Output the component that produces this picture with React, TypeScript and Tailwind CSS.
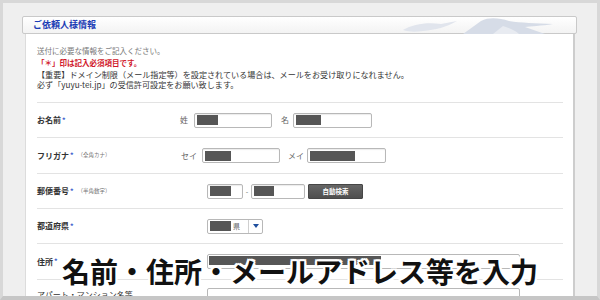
import type { ReactNode } from 'react';

const jp = "font-['Noto_Sans_CJK_JP','Noto_Sans',sans-serif]";

function Box({ w, fill, h = 'h-[15px]' }: { w: string; fill: string; h?: string }) {
  return (
    <div
      className={`flex items-center rounded-[2px] border border-[#b8b8b8] bg-white pl-[2px] shadow-[inset_0_1px_1px_rgba(0,0,0,0.08)] ${h} ${w}`}
    >
      <span className={`h-[10px] bg-[#565656] ${fill}`} />
    </div>
  );
}

function Label({ text, note }: { text: string; note?: string }) {
  return (
    <div className="flex w-[143px] shrink-0 items-center">
      <span className="text-[8px] font-bold text-[#333]">{text}</span>
      <span className="ml-[1px] text-[7px] font-bold text-[#3a5ccc]">*</span>
      {note ? <span className="ml-[4px] text-[5.5px] text-[#777]">{note}</span> : null}
    </div>
  );
}

function Row({ h, children }: { h: string; children: ReactNode }) {
  return <div className={`flex items-center border-t border-[#e3e3e3] ${h}`}>{children}</div>;
}

function Wave() {
  return (
    <svg
      className="absolute left-[378px] top-0"
      width="160"
      height="17"
      viewBox="0 0 160 17"
      fill="none"
    >
      <path d="M2 13 C12 7 26 5 40 7 L56 4 C46 10 34 13 22 14 C14 15 8 15 2 13 Z" fill="#e1e5ed" />
      <path
        d="M62 17 L80 4 C88 0 98 1 108 4 C120 6 134 6 152 7 C140 9 130 9 124 10 L144 17 Z"
        fill="#d6dce7"
      />
      <path d="M92 17 L102 9 C108 11 114 13 118 17 Z" fill="#e8ebf1" />
    </svg>
  );
}

export default function App() {
  return (
    <div
      className={`relative flex h-[300px] w-[600px] flex-col overflow-hidden border-[3px] border-b-4 border-[#d8d8d8] border-b-[#c6c6c6] bg-[#efefef] ${jp}`}
    >
      <div className="relative ml-[19px] mt-[13px] flex h-[18px] w-[555px] shrink-0 items-center rounded-[2px] border border-[#c9c9c9] bg-gradient-to-b from-white to-[#f3f3f3] pl-[10px]">
        <Wave />
        <span className="relative text-[9px] font-bold text-[#1c3db5]">ご依頼人様情報</span>
      </div>

      <div className="ml-[22px] flex w-[550px] flex-1 flex-col border-l border-r-2 border-l-[#dcdcdc] border-r-[#cdcdcd] bg-white pl-[11px] pr-[10px]">
        <div className="pb-[12px] pt-[11px]">
          <p className="h-[12px] text-[7.5px] leading-[12px] text-[#777]">送付に必要な情報をご記入ください。</p>
          <p className="h-[12px] text-[7.5px] font-bold leading-[12px] text-[#d0172a]">「＊」印は記入必須項目です。</p>
          <p className="mt-[1px] text-[8.1px] leading-[10px] text-[#333]">
            【重要】ドメイン制限（メール指定等）を設定されている場合は、メールをお受け取りになれません。
            <br />
            必ず「yuyu-tei.jp」の受信許可設定をお願い致します。
          </p>
        </div>

        <Row h="h-[35px]">
          <Label text="お名前" />
          <span className="w-[14px] text-[8px] text-[#666]">姓</span>
          <Box w="w-[78px]" fill="w-[21px]" />
          <span className="ml-[9px] w-[12px] text-[8px] text-[#666]">名</span>
          <Box w="w-[79px]" fill="w-[25px]" />
        </Row>

        <Row h="h-[36px]">
          <Label text="フリガナ" note="（全角カナ）" />
          <span className="w-[22px] pl-[1px] text-[8px] text-[#666]">セイ</span>
          <Box w="w-[78px]" fill="w-[26px]" />
          <span className="ml-[8px] w-[19px] text-[8px] text-[#666]">メイ</span>
          <Box w="w-[79px]" fill="w-[45px]" />
        </Row>

        <Row h="h-[35px]">
          <Label text="郵便番号" note="（半角数字）" />
          <div className="ml-[27px] flex items-center">
            <Box w="w-[36px]" fill="w-[21px]" />
            <span className="w-[8px] text-center text-[7px] text-[#666]">-</span>
            <Box w="w-[54px]" fill="w-[20px]" />
            <button
              type="button"
              className="ml-[3px] h-[15px] w-[55px] rounded-[1px] border border-[#464646] bg-gradient-to-b from-[#666] to-[#4f4f4f] text-[6.5px] font-bold leading-none text-white"
            >
              自動検索
            </button>
          </div>
        </Row>

        <Row h="h-[35px]">
          <Label text="都道府県" />
          <div className="ml-[27px] flex h-[15px] w-[56px] items-center rounded-[2px] border border-[#b8b8b8] bg-white pl-[2px]">
            <span className="h-[10px] w-[21px] bg-[#565656]" />
            <span className="ml-[2px] w-[15px] text-[7px] text-[#666]">県</span>
            <span className="flex h-full flex-1 items-center justify-center border-l border-[#cfcfcf]">
              <svg width="6" height="4" viewBox="0 0 6 4">
                <path d="M0 0 H6 L3 4 Z" fill="#1f4f9e" />
              </svg>
            </span>
          </div>
        </Row>

        <Row h="h-[36px]">
          <Label text="住所" />
          <div className="ml-[27px] flex h-[15px] w-[313px] items-start rounded-[2px] border border-[#b8b8b8] bg-white pl-[1px] pt-[1px]">
            <span className="h-[9px] w-[172px] bg-[#565656]" />
          </div>
        </Row>

        <div className="flex h-[35px] items-start border-t border-[#e3e3e3]">
          <div className="w-[143px] shrink-0 pt-[9px] text-[8px] text-[#333]">アパート・マンション名等</div>
          <div className="ml-[27px] mt-[8px] h-[15px] w-[313px] rounded-[2px] border border-[#b8b8b8] bg-white" />
        </div>
      </div>

      <div className="absolute left-0 right-0 top-[254px] text-center text-[28px] font-bold leading-none text-[#111] [text-shadow:2px_0_0_#fff,-2px_0_0_#fff,0_2px_0_#fff,0_-2px_0_#fff,2px_2px_0_#fff,-2px_-2px_0_#fff,2px_-2px_0_#fff,-2px_2px_0_#fff,0_0_3px_#fff]">
        名前・住所・メールアドレス等を入力
      </div>
    </div>
  );
}
